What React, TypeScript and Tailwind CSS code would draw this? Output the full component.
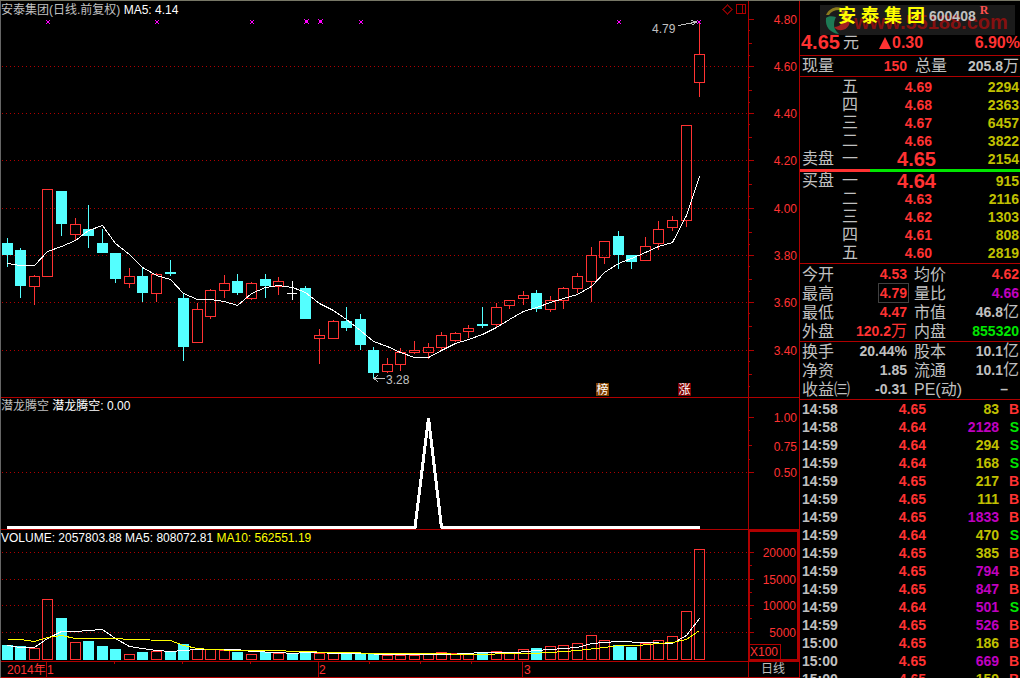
import type { ReactNode } from 'react'

type Kind = 'up' | 'down' | 'flat'

// high, body top, body bottom, low (chart pixels), kind, top of the volume bar
type Candle = [number, number, number, number, Kind, number]

const candles: Candle[] = [
  [238, 243, 254, 266, 'down', 645],
  [248, 250, 285, 297, 'down', 646],
  [275, 276, 286, 304, 'up', 648],
  [189, 189, 276, 276, 'up', 599],
  [191, 191, 223, 235, 'down', 618],
  [218, 224, 234, 239, 'up', 642],
  [205, 229, 235, 247, 'down', 641],
  [229, 243, 252, 252, 'down', 646],
  [253, 253, 278, 282, 'down', 649],
  [268, 276, 283, 287, 'up', 654],
  [267, 276, 292, 301, 'down', 652],
  [273, 274, 293, 301, 'up', 651],
  [260, 272, 273, 275, 'down', 652],
  [294, 298, 346, 360, 'down', 644],
  [303, 309, 342, 342, 'up', 649],
  [289, 290, 316, 318, 'up', 649],
  [275, 283, 290, 297, 'up', 650],
  [274, 281, 292, 294, 'down', 652],
  [282, 283, 298, 299, 'up', 654],
  [274, 279, 285, 297, 'down', 652],
  [277, 281, 286, 294, 'up', 653],
  [281, 293, 293, 299, 'flat', 654],
  [286, 288, 318, 318, 'down', 653],
  [329, 335, 338, 363, 'up', 653],
  [320, 321, 338, 338, 'up', 653],
  [307, 321, 327, 330, 'down', 653],
  [314, 319, 344, 349, 'down', 653],
  [347, 350, 372, 378, 'down', 653],
  [358, 364, 371, 372, 'up', 655],
  [348, 352, 364, 370, 'up', 655],
  [341, 350, 352, 353, 'up', 655],
  [343, 347, 352, 358, 'up', 654],
  [332, 335, 347, 349, 'up', 652],
  [332, 333, 340, 341, 'up', 653],
  [325, 328, 331, 337, 'up', 654],
  [307, 324, 325, 327, 'down', 652],
  [303, 307, 324, 326, 'up', 651],
  [300, 300, 305, 308, 'up', 653],
  [291, 295, 298, 304, 'up', 649],
  [290, 293, 308, 311, 'down', 648],
  [296, 300, 309, 311, 'up', 646],
  [287, 288, 300, 308, 'up', 645],
  [273, 276, 288, 292, 'up', 643],
  [247, 255, 281, 301, 'up', 635],
  [241, 241, 257, 263, 'up', 640],
  [231, 236, 254, 268, 'down', 645],
  [255, 255, 261, 268, 'down', 647],
  [237, 246, 260, 260, 'up', 643],
  [221, 229, 243, 249, 'up', 640],
  [216, 220, 227, 230, 'up', 636],
  [125, 125, 220, 226, 'up', 611],
  [22, 54, 82, 96, 'up', 549],
]

const ma5 = [
  263, 265, 265, 251, 246, 240, 230, 225, 243, 254, 267, 275, 279, 293, 299, 299, 301, 305, 293, 287,
  285, 287, 292, 303, 310, 319, 330, 341, 346, 352, 357, 357, 350, 343, 339, 334, 327, 319, 311, 307,
  302, 298, 294, 286, 272, 263, 258, 252, 246, 242, 215, 176,
]

const volMa5 =
  '7,645 20,647 34,647 47,638 61,631 75,631 88,630 102,629 115,638 129,646 142,648 156,650 170,651 183,650 197,649 237,649 251,651 278,652 292,653 305,652 346,653 400,654 448,654 482,652 515,652 536,650 563,648 577,647 591,643 604,642 618,641 645,642 672,643 686,635 699,618'
const volMa10 =
  '7,639 20,639 34,641 47,637 61,635 75,638 115,638 129,639 170,640 183,645 197,648 210,649 237,650 278,650 292,651 340,652 381,653 440,653 460,654 530,653 550,652 577,650 604,647 618,645 637,645 658,643 672,642 686,639 699,630'

const priceLevels: [string, number][] = [
  ['4.80', 19],
  ['4.60', 66],
  ['4.40', 113],
  ['4.20', 160],
  ['4.00', 208],
  ['3.80', 255],
  ['3.60', 302],
  ['3.40', 350],
]

const volumeLevels: [string, number][] = [
  ['20000', 552],
  ['15000', 579],
  ['10000', 605],
  ['5000', 632],
]

const crosses = [48, 157, 252, 361, 619, 699]
const boldCrosses = [306, 320]

const asks = [
  ['', '五', '4.69', '2294'],
  ['', '四', '4.68', '2363'],
  ['', '三', '4.67', '6457'],
  ['', '二', '4.66', '3822'],
  ['卖盘', '一', '4.65', '2154'],
]

const bids = [
  ['买盘', '一', '4.64', '915'],
  ['', '二', '4.63', '2116'],
  ['', '三', '4.62', '1303'],
  ['', '四', '4.61', '808'],
  ['', '五', '4.60', '2819'],
]

const ticks = [
  ['14:58', '4.65', '83', 'B'],
  ['14:58', '4.64', '2128', 'S'],
  ['14:59', '4.64', '294', 'S'],
  ['14:59', '4.64', '168', 'S'],
  ['14:59', '4.65', '217', 'B'],
  ['14:59', '4.65', '111', 'B'],
  ['14:59', '4.65', '1833', 'B'],
  ['14:59', '4.64', '470', 'S'],
  ['14:59', '4.65', '385', 'B'],
  ['14:59', '4.65', '794', 'B'],
  ['14:59', '4.65', '847', 'B'],
  ['14:59', '4.64', '501', 'S'],
  ['14:59', '4.65', '526', 'B'],
  ['15:00', '4.65', '186', 'B'],
  ['15:00', '4.65', '669', 'B'],
  ['15:00', '4.65', '159', 'B'],
]

const RED = '#ff3232'
const CYAN = '#54ffff'
const GRID = '#b00000'

const cx = (i: number) => Math.round(6.62 + 13.58 * i)

function GridLine({ y }: { y: number }) {
  return <line x1={2} x2="100%" y1={y + 0.5} y2={y + 0.5} stroke={GRID} strokeDasharray="1 3" />
}

function Tick({ y, size }: { y: number; size: number }) {
  return <rect x={0} y={y} width={size} height={1} fill={GRID} />
}

function CandleShape({ candle, x }: { candle: Candle; x: number }) {
  const [high, top, bottom, low, kind] = candle
  if (kind === 'flat') {
    return (
      <g fill="#fff">
        <rect x={x} y={high} width={1} height={low - high + 1} />
        <rect x={x - 5} y={top} width={10} height={1} />
      </g>
    )
  }
  if (kind === 'down') {
    return (
      <g fill={CYAN}>
        <rect x={x} y={high} width={1} height={low - high + 1} />
        <rect x={x - 5} y={top} width={11} height={bottom - top + 1} />
      </g>
    )
  }
  return (
    <g fill={RED}>
      <rect x={x} y={high} width={1} height={top - high} />
      <rect x={x} y={bottom} width={1} height={low - bottom + 1} />
      <rect x={x - 4.5} y={top + 0.5} width={10} height={bottom - top} fill="none" stroke={RED} />
    </g>
  )
}

function PricePanel() {
  return (
    <section className="flex border-b border-[#b00000]">
      <div className="relative min-w-0 flex-1">
        <h2 className="absolute left-0 top-0 text-xs leading-[18px] text-[#c0c0c0]">
          安泰集团(日线.前复权) <span className="text-white">MA5: 4.14</span>
        </h2>
        <svg className="block h-[396px] w-full" shapeRendering="crispEdges">
          <g transform="translate(-1,-1)">
            {priceLevels.slice(1).map(([label, y]) => (
              <GridLine key={label} y={y} />
            ))}
            {candles.map((c, i) => (
              <CandleShape key={i} candle={c} x={cx(i)} />
            ))}
            <polyline
              points={ma5.map((y, i) => `${cx(i) + 0.5},${y + 0.5}`).join(' ')}
              fill="none"
              stroke="#fff"
            />
            <g fill="#ff00ff">
              {crosses.map((x) => (
                <path
                  key={x}
                  d={`M${x - 2} 20h1v1h-1z M${x + 1} 20h1v1h-1z M${x - 1} 21h2v2h-2z M${x - 2} 23h1v1h-1z M${x + 1} 23h1v1h-1z`}
                />
              ))}
              {boldCrosses.map((x) => (
                <path
                  key={x}
                  d={`M${x - 2} 19h1v1h-1z M${x + 2} 19h1v1h-1z M${x - 1} 20h3v3h-3z M${x - 2} 23h1v1h-1z M${x + 2} 23h1v1h-1z`}
                />
              ))}
            </g>
            <g stroke="#c0c0c0" fill="none">
              <path d="M678 25.5 L697 22 M691 20.5 L697 22 L692 25" />
              <path d="M374 378.5 H385 M378 375 L374 378.5 L378 382" />
            </g>
            <text x={652} y={33} className="fill-[#c0c0c0] text-xs">
              4.79
            </text>
            <text x={386} y={384} className="fill-[#c0c0c0] text-xs">
              3.28
            </text>
            <path d="M727.5 5 L732 9.5 L727.5 14 L723 9.5 Z" fill="none" stroke="#800000" />
            <path d="M736.5 4.5 H745.5 V13.5 H736.5 Z M742.5 4.5 V13.5" fill="none" stroke={GRID} />
            <rect x={596} y={383} width={13} height={13} fill="#804000" />
            <text x={596.5} y={394} className="fill-white text-xs">
              榜
            </text>
            <rect x={678} y={383} width={13} height={13} fill="#800000" />
            <text x={678.5} y={394} className="fill-white text-xs">
              涨
            </text>
          </g>
        </svg>
      </div>
      <svg className="block h-[396px] w-[51px] border-l border-[#b00000]" shapeRendering="crispEdges">
        <g transform="translate(0,-1)">
          {priceLevels.map(([label, y]) => (
            <g key={label}>
              <Tick y={y} size={5} />
              <Tick y={y + 11} size={1} />
              <Tick y={y + 24} size={3} />
              <Tick y={y + 36} size={1} />
              <text x={48} y={y + 5} textAnchor="end" className="fill-[#ff3232] text-xs">
                {label}
              </text>
            </g>
          ))}
        </g>
      </svg>
    </section>
  )
}

function SignalPanel() {
  return (
    <section className="flex border-b border-[#b00000]">
      <div className="relative min-w-0 flex-1">
        <h2 className="absolute left-0 top-0 text-xs leading-[16px] text-[#c0c0c0]">
          潜龙腾空 <span className="text-white">潜龙腾空: 0.00</span>
        </h2>
        <svg className="block h-[131px] w-full" shapeRendering="crispEdges">
          <g transform="translate(-1,-398)">
            <GridLine y={472} />
            <polyline
              points="7,527.5 415,527.5 428.5,418 441.5,527.5 700,527.5"
              fill="none"
              stroke="#fff"
              strokeWidth={3}
              strokeLinejoin="bevel"
            />
          </g>
        </svg>
      </div>
      <svg className="block h-[131px] w-[51px] border-l border-[#b00000]" shapeRendering="crispEdges">
        <g transform="translate(0,-398)">
          <Tick y={417} size={5} />
          <Tick y={430} size={1} />
          <Tick y={445} size={3} />
          <Tick y={459} size={1} />
          <Tick y={472} size={5} />
          <g textAnchor="end" className="fill-[#ff3232] text-xs">
            <text x={48} y={422}>
              1.00
            </text>
            <text x={48} y={451}>
              0.75
            </text>
            <text x={48} y={477}>
              0.50
            </text>
          </g>
        </g>
      </svg>
    </section>
  )
}

function VolumePanel() {
  return (
    <section className="flex border-b border-[#b00000]">
      <div className="relative min-w-0 flex-1">
        <h2 className="absolute left-0 top-0 text-xs leading-[16px] text-white">
          VOLUME: 2057803.88 MA5: 808072.81 <span className="text-[#ffff00]">MA10: 562551.19</span>
        </h2>
        <svg className="block h-[131px] w-full" shapeRendering="crispEdges">
          <g transform="translate(-1,-530)">
            {volumeLevels.map(([label, y]) => (
              <GridLine key={label} y={y} />
            ))}
            {candles.map((c, i) =>
              c[4] === 'up' ? (
                <rect
                  key={i}
                  x={cx(i) - 4.5}
                  y={c[5] + 0.5}
                  width={10}
                  height={659 - c[5]}
                  fill="none"
                  stroke={RED}
                />
              ) : (
                <rect key={i} x={cx(i) - 5} y={c[5]} width={11} height={660 - c[5]} fill={CYAN} />
              ),
            )}
            <g transform="translate(0.5,0.5)" fill="none">
              <polyline points={volMa5} stroke="#fff" />
              <polyline points={volMa10} stroke="#ffff00" />
            </g>
          </g>
        </svg>
      </div>
      <svg className="block h-[131px] w-[51px] border-2 border-[#b00000]" shapeRendering="crispEdges">
        <g transform="translate(0,-532)">
          {volumeLevels.map(([label, y]) => (
            <g key={label}>
              <Tick y={y} size={4} />
              {y < 632 && <Tick y={y + 13} size={2} />}
              <text x={46} y={y + 5} textAnchor="end" className="fill-[#ff3232] text-xs">
                {label}
              </text>
            </g>
          ))}
          <path d="M0 644.5 H30.5 V660" fill="none" stroke={GRID} />
          <text x={0} y={656} className="fill-[#ff3232] text-xs">
            X100
          </text>
        </g>
      </svg>
    </section>
  )
}

function DateAxis() {
  return (
    <footer className="flex border-b border-[#b00000] text-xs">
      <svg className="block h-[15px] min-w-0 flex-1" shapeRendering="crispEdges">
        <g transform="translate(-1,0)">
          <g fill={GRID}>
            {[46, 318, 522].map((x) => (
              <rect key={x} x={x} y={0} width={1} height={15} />
            ))}
            {[114, 182, 250, 369, 420, 471].map((x) => (
              <rect key={x} x={x} y={0} width={1} height={2} />
            ))}
          </g>
          <g className="fill-[#ff3232] text-xs">
            <text x={7} y={12}>
              2014年
            </text>
            <text x={47} y={12}>
              1
            </text>
            <text x={319} y={12}>
              2
            </text>
            <text x={524} y={12}>
              3
            </text>
          </g>
        </g>
      </svg>
      <div className="w-[51px] border-l border-[#b00000] pl-3 leading-[15px] text-[#c0c0c0]">日线</div>
    </footer>
  )
}

function Watermark() {
  return (
    <div className="absolute left-5 top-1 flex h-[30px] w-[195px] items-center bg-[#1b1b1b]">
      <svg viewBox="0 0 30 30" className="ml-1 h-[30px] w-[30px] shrink-0">
        <path d="M2 10 C6 1 17 0 22 6 C14 4 8 5 5 10 Z" fill="#8c7a1e" />
        <path d="M2 13 C1 22 6 28 15 29 C9 24 9 18 12 12 C8 11 4 11 2 13 Z" fill="#1d7a55" />
        <path d="M10 22 C16 22 19 18 19 12 C24 12 27 15 25 20 C22 26 14 27 10 22 Z" fill="#a32020" />
        <path d="M18 10 C16 6 20 4 24 8 C27 12 24 14 21 13 Z" fill="#a35020" />
      </svg>
      <span className="pt-1 text-xl font-bold leading-none text-[#861010]">www.55188.com</span>
    </div>
  )
}

function BookTable({ rows, name }: { rows: string[][]; name: string }) {
  return (
    <table aria-label={name} className="w-full table-fixed">
      <tbody>
        {rows.map(([side, level, price, volume]) => (
          <tr key={level} className="h-[18px] leading-[18px]">
            <td className="w-[42px] p-0 pl-[2px] text-base leading-[18px]">{side}</td>
            <td className="w-[26px] p-0 text-base leading-[18px]">{level}</td>
            <td
              className={
                side
                  ? 'w-[68px] p-0 text-right text-xl font-bold leading-[18px] text-[#ff3232]'
                  : 'w-[68px] p-0 pr-1 text-right font-bold text-[#ff3232]'
              }
            >
              {price}
            </td>
            <td className="p-0 pr-px text-right font-bold text-[#c0c000]">{volume}</td>
          </tr>
        ))}
      </tbody>
    </table>
  )
}

function Unit({ children }: { children: ReactNode }) {
  return <span className="text-base font-normal leading-none">{children}</span>
}

function QuoteRow(props: { left: string; a: ReactNode; right: string; b: ReactNode; dash?: boolean }) {
  return (
    <tr className="h-[19px] leading-[17px]">
      <th className="w-[51px] whitespace-nowrap p-0 pl-[2px] text-left text-base font-normal leading-[17px]">
        {props.left}
      </th>
      <td className="w-[57px] whitespace-nowrap p-0 pr-px text-right font-bold">{props.a}</td>
      <th className="w-[52px] whitespace-nowrap p-0 pl-[6px] text-left text-base font-normal leading-[17px]">
        {props.right}
      </th>
      <td className={props.dash ? 'p-0 pr-3 text-right font-bold' : 'whitespace-nowrap p-0 pr-px text-right font-bold'}>
        {props.b}
      </td>
    </tr>
  )
}

function QuotePanel() {
  return (
    <aside className="flex w-[221px] shrink-0 flex-col overflow-hidden border-l border-[#b00000] text-sm text-[#c0c0c0]">
      <header className="relative h-[55px] shrink-0 border-b border-[#b00000]">
        <Watermark />
        <div className="relative flex h-[30px] items-center pl-[38px]">
          <h1 className="flex gap-[5px] text-lg font-bold leading-none text-[#ffff00]">
            <span>安</span>
            <span>泰</span>
            <span>集</span>
            <span>团</span>
          </h1>
          <span className="ml-1 font-bold">600408</span>
          <sup className="ml-1 font-['Liberation_Serif',serif] text-xs font-bold text-[#ff5050]">R</sup>
        </div>
        <div className="relative flex h-[23px] items-center whitespace-nowrap pl-px font-bold leading-[23px] text-[#ff3232]">
          <strong className="w-[42px] text-xl leading-[23px]">4.65</strong>
          <span className="w-9 text-base font-normal text-[#c0c0c0]">元</span>
          <svg viewBox="0 0 12 12" className="mr-px h-3 w-3">
            <path d="M6 0 L12 12 H0 Z" fill={RED} />
          </svg>
          <span className="text-base">0.30</span>
          <span className="ml-auto text-base">6.90%</span>
        </div>
      </header>

      <div className="flex h-[21px] shrink-0 items-center border-b border-[#b00000] pl-[2px] pr-px font-bold">
        <span className="w-[54px] text-base font-normal">现量</span>
        <span className="w-[51px] text-right text-[#ff3232]">150</span>
        <span className="ml-2 text-base font-normal">总量</span>
        <span className="ml-auto whitespace-nowrap">
          205.8<Unit>万</Unit>
        </span>
      </div>

      <div className="py-px">
        <BookTable rows={asks} name="卖盘" />
      </div>
      <div className="flex h-[3px] shrink-0">
        <div className="w-[70px] bg-[#ff3232]" />
        <div className="flex-1 bg-[#00e600]" />
      </div>
      <div className="border-b border-[#b00000] pb-px">
        <BookTable rows={bids} name="买盘" />
      </div>

      <div className="border-b border-[#b00000] pt-px">
        <table className="w-full table-fixed">
          <tbody>
            <QuoteRow
              left="今开"
              a={<span className="text-[#ff3232]">4.53</span>}
              right="均价"
              b={<span className="text-[#ff3232]">4.62</span>}
            />
            <QuoteRow
              left="最高"
              a={<span className="text-[#ff3232] outline outline-offset-1 outline-[#404040]">4.79</span>}
              right="量比"
              b={<span className="text-[#c000c0]">4.66</span>}
            />
            <QuoteRow
              left="最低"
              a={<span className="text-[#ff3232]">4.47</span>}
              right="市值"
              b={<>46.8<Unit>亿</Unit></>}
            />
            <QuoteRow
              left="外盘"
              a={<span className="text-[#ff3232]">120.2<Unit>万</Unit></span>}
              right="内盘"
              b={<span className="text-[#00e600]">855320</span>}
            />
          </tbody>
        </table>
      </div>

      <div className="border-b border-[#b00000]">
        <table className="w-full table-fixed">
          <tbody>
            <QuoteRow left="换手" a="20.44%" right="股本" b={<>10.1<Unit>亿</Unit></>} />
            <QuoteRow left="净资" a="1.85" right="流通" b={<>10.1<Unit>亿</Unit></>} />
            <QuoteRow left="收益㈢" a="-0.31" right="PE(动)" b="–" dash />
          </tbody>
        </table>
      </div>

      <table className="w-full table-fixed font-bold">
        <tbody>
          {ticks.map(([time, price, volume, flag], i) => (
            <tr key={i} className="h-[18px] leading-[18px]">
              <td className="w-[60px] p-0 pl-[2px]">{time}</td>
              <td className="w-[66px] p-0 text-right text-[#ff3232]">{price}</td>
              <td
                className={
                  Number(volume) >= 500
                    ? 'w-[73px] p-0 text-right text-[#c000c0]'
                    : 'w-[73px] p-0 text-right text-[#c0c000]'
                }
              >
                {volume}
              </td>
              <td
                className={
                  flag === 'B' ? 'p-0 pr-px text-right text-[#ff3232]' : 'p-0 pr-px text-right text-[#00e600]'
                }
              >
                {flag}
              </td>
            </tr>
          ))}
        </tbody>
      </table>
    </aside>
  )
}

export default function App() {
  return (
    <div className="flex h-screen overflow-hidden border-t border-[#777766] bg-black font-['Liberation_Sans','Noto_Sans_CJK_SC',sans-serif]">
      <main className="min-w-0 flex-1 border-l border-[#666666]">
        <PricePanel />
        <SignalPanel />
        <VolumePanel />
        <DateAxis />
      </main>
      <QuotePanel />
    </div>
  )
}
